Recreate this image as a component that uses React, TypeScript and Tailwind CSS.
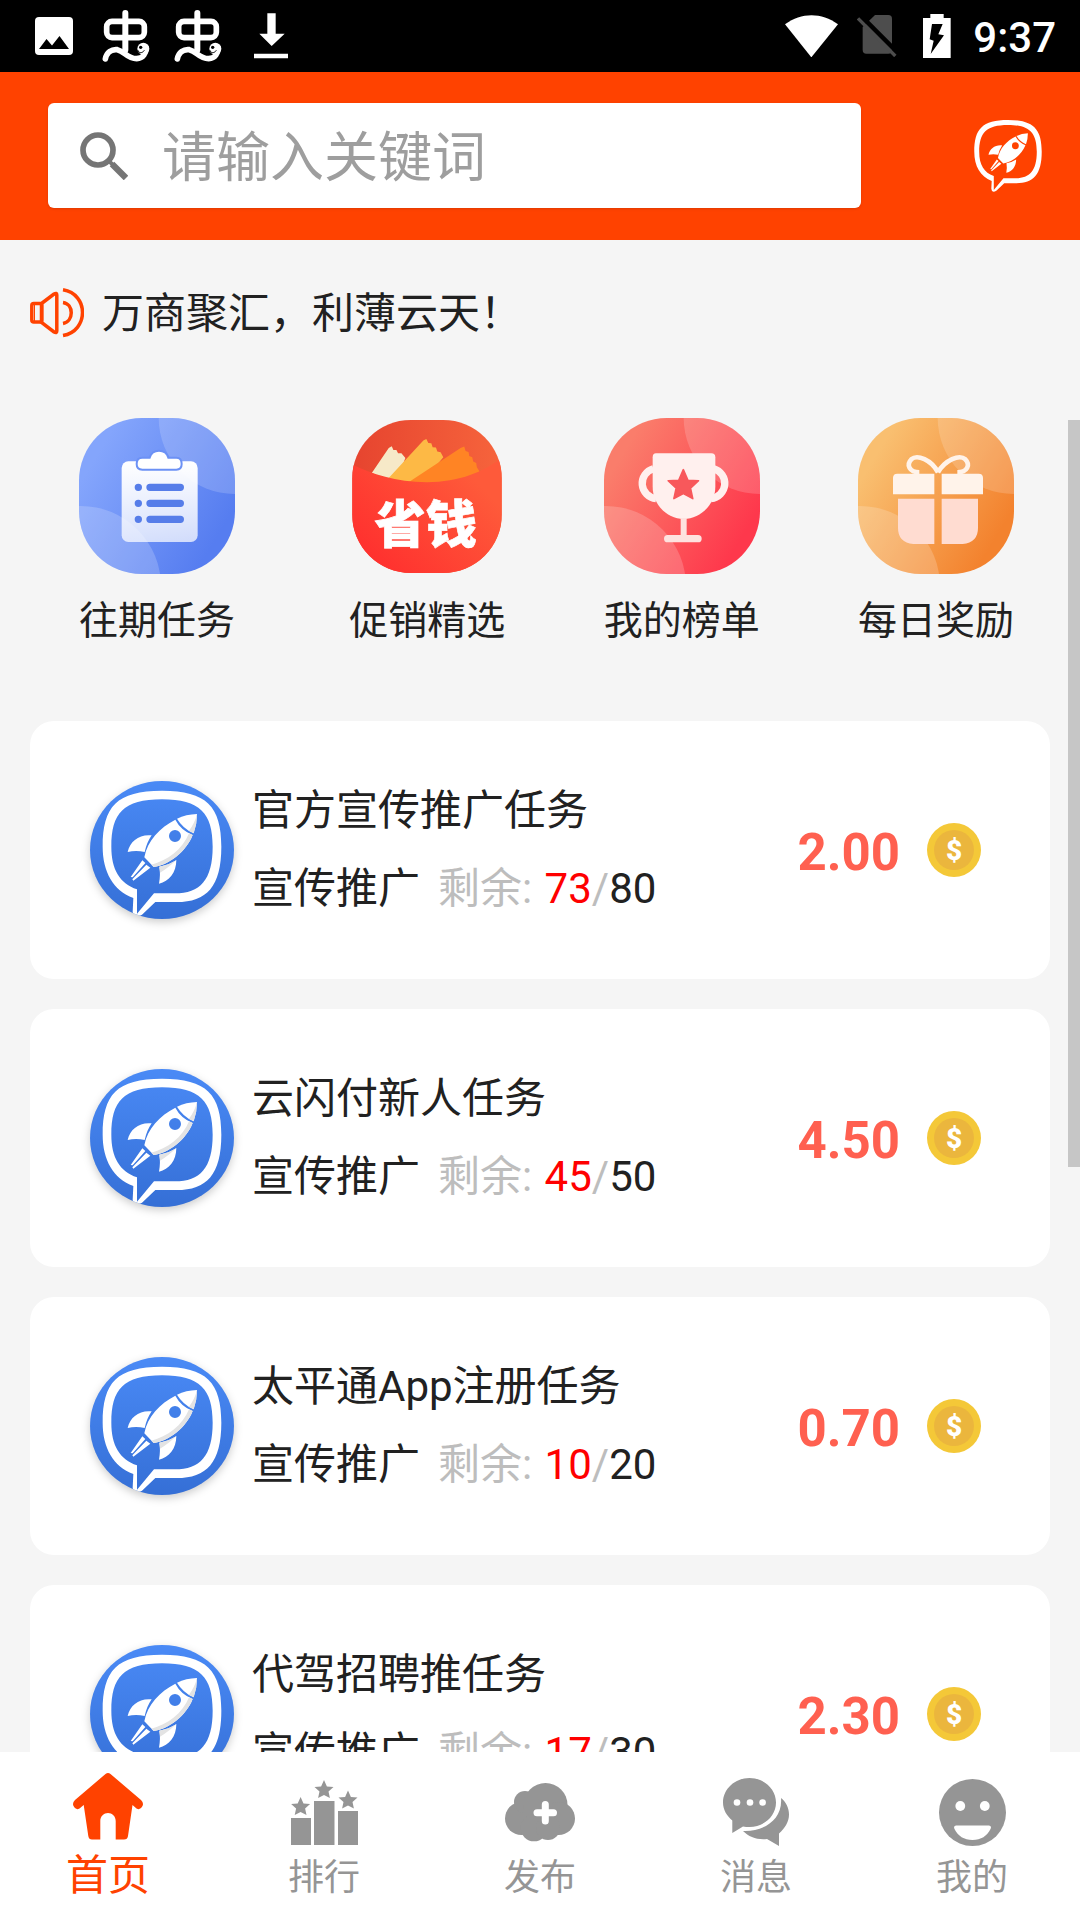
import React from "react";

type Task = {
  title: string;
  category: string;
  left: number;
  total: number;
  price: string;
};

const tasks: Task[] = [
  { title: "官方宣传推广任务", category: "宣传推广", left: 73, total: 80, price: "2.00" },
  { title: "云闪付新人任务", category: "宣传推广", left: 45, total: 50, price: "4.50" },
  { title: "太平通App注册任务", category: "宣传推广", left: 10, total: 20, price: "0.70" },
  { title: "代驾招聘推任务", category: "宣传推广", left: 17, total: 30, price: "2.30" },
];

const STAR = "0,-10 2.9,-3.4 9.5,-3.1 4.5,1.5 5.9,8.1 0,4.9 -5.9,8.1 -4.5,1.5 -9.5,-3.1 -2.9,-3.4";

/* ---------- status bar icons ---------- */

const WormIcon = () => (
  <svg className="h-[52px] w-12" viewBox="306 32 144 156" fill="none" stroke="#fff">
    <rect x="320" y="66" width="113" height="49" rx="16" strokeWidth="17" />
    <path d="M376 41V152" strokeWidth="18" strokeLinecap="round" />
    <path
      d="M316 179C320 159 335 149 352 151C375 156 380 178 410 178C430 177 438 162 438 145"
      strokeWidth="17"
      strokeLinecap="round"
    />
    <circle cx="430" cy="148" r="18" fill="#fff" stroke="none" />
    <path d="M413 152C417 163 427 162 433 153" stroke="#000" strokeWidth="3" />
    <circle cx="422" cy="144" r="5" fill="#000" stroke="none" />
  </svg>
);

const StatusBar = () => (
  <div className="flex h-[72px] shrink-0 items-center justify-between bg-black pl-[35px] pr-6">
    <div className="flex items-center">
      <svg className="size-[38px]" viewBox="0 0 38 38">
        <rect width="38" height="38" rx="4" fill="#fff" />
        <path d="M4 32L11.500 22L17 28.500L24.500 19L34 32Z" fill="#000" />
      </svg>
      <div className="ml-[29px] flex gap-6">
        <WormIcon />
        <WormIcon />
      </div>
      <svg className="ml-8 h-[46px] w-[34px]" viewBox="760 41 102 138" fill="#fff">
        <path d="M800 42H825V103H852L813 140L776 103H800Z" />
        <path d="M760 163H862V177H760Z" />
      </svg>
    </div>
    <div className="flex items-center">
      <svg className="h-[42px] w-[53px]" viewBox="195 42 159 126" fill="#fff">
        <path d="M195 70C245 34 304 34 354 70L274 169Z" />
      </svg>
      <svg className="ml-[19px] h-[42px] w-10" viewBox="409 48 120 126">
        <path d="M463 48H503Q514 48 514 59V153Q514 164 503 164H437Q426 164 426 153V84Z" fill="#4d4d4d" />
        <path d="M420 50L535 165" stroke="#000" strokeWidth="14" />
        <path d="M412 58L524 171" stroke="#4d4d4d" strokeWidth="10" />
      </svg>
      <svg className="ml-[26px] h-[44px] w-7" viewBox="609 42 84 132">
        <path d="M631 42H671V54H692V174H609V54H631Z" fill="#fff" />
        <path d="M636 72H668L655 103L672 106L632 162L641 122L629 118Z" fill="#000" />
      </svg>
      <span className="ml-[22px] pt-[3px] text-[42px] font-medium leading-[50px] text-white">9:37</span>
    </div>
  </div>
);

/* ---------- rocket logo ---------- */

const RocketShapes = ({ shaded = false }: { shaded?: boolean }) => (
  <>
    <path
      fill="#fff"
      fillRule="evenodd"
      d="M160 384C100 362 68 305 68 230C68 110 110 62 246 62C380 62 424 110 424 230C424 350 380 396 290 396H226L186 434Q160 450 158 425ZM171 358C120 340 94 300 94 230C94 130 130 88 246 88C360 88 398 130 398 230C398 330 360 370 285 370H222L171 431Z"
    />
    <path fill="#fff" d="M291 146Q318 133 351 132Q351 162 341 190Q309 176 291 146Z" />
    <path
      fill="#fff"
      fillRule="evenodd"
      d="M286 149C240 172 202 212 193 262L221 291C268 284 318 246 338 195Q302 180 286 149ZM285 180A18 18 0 1 0 285 216A18 18 0 1 0 285 180Z"
    />
    <path fill="#fff" d="M143 246C150 213 178 192 215 196Q200 218 194 246Q168 240 143 246Z" />
    <path fill="#fff" d="M289 270C289 308 267 334 237 341Q242 312 238 290Q267 285 289 270Z" />
    <path fill="#fff" d="M187 271L196 279L158 322L152 321ZM199 284L211 293L160 332L157 328Z" />
    {shaded && (
      <>
        <path fill="#e3e3e3" d="M351 132Q351 162 341 190L327 182Q344 160 351 132Z" />
        <path fill="#e3e3e3" d="M338 195C318 246 268 284 221 291L214 284C262 272 308 238 327 190Z" />
        <path fill="#e3e3e3" d="M289 270Q262 296 240 308L238 290Q267 285 289 270Z" />
      </>
    )}
  </>
);

const TaskLogo = () => (
  <svg
    className="h-[138px] w-36 shrink-0 overflow-visible drop-shadow-[0_3px_4px_rgba(0,0,0,0.2)]"
    viewBox="30 33 432 414"
  >
    <defs>
      <linearGradient id="task-logo-bg" x2="0" y2="1">
        <stop stopColor="#4a8af6" />
        <stop offset="1" stopColor="#356fd6" />
      </linearGradient>
      <clipPath id="task-logo-clip">
        <ellipse cx="246" cy="240" rx="216" ry="207" />
      </clipPath>
    </defs>
    <g clipPath="url(#task-logo-clip)">
      <rect x="30" y="33" width="432" height="414" fill="url(#task-logo-bg)" />
      <RocketShapes shaded />
    </g>
  </svg>
);

const Coin = () => (
  <svg className="size-[54px]" viewBox="0 0 54 54">
    <circle cx="27" cy="27" r="27" fill="#f4c838" />
    <circle cx="27" cy="27" r="20" fill="#ebb63d" />
    <text x="27" y="37" textAnchor="middle" fontSize="28" fontWeight="900" fill="#fff">
      $
    </text>
  </svg>
);

/* ---------- shortcut icons ---------- */

type BadgeProps = { id: string; from: string; to: string; children: React.ReactNode };

const Badge = ({ id, from, to, children }: BadgeProps) => (
  <svg className="size-[156px]" viewBox="0 0 468 468">
    <defs>
      <linearGradient id={id} x1="0" y1="0.2" x2="1" y2="0.8">
        <stop offset="0.1" stopColor={from} />
        <stop offset="0.9" stopColor={to} />
      </linearGradient>
      <linearGradient id={`${id}-paper`} x2="0" y2="1">
        <stop stopColor="#fff" />
        <stop offset="1" stopColor="#fff" stopOpacity="0.72" />
      </linearGradient>
      <clipPath id={`${id}-clip`}>
        <rect width="468" height="468" rx="188" />
      </clipPath>
    </defs>
    <g clipPath={`url(#${id}-clip)`}>
      <rect width="468" height="468" fill={`url(#${id})`} />
      <circle cx="467" cy="0" r="228" fill="#fff" opacity="0.17" />
      <circle cx="5" cy="505" r="241" fill="#fff" opacity="0.19" />
    </g>
    {children}
  </svg>
);

const HistoryIcon = () => (
  <Badge id="history" from="#84a5fc" to="#567df0">
    <rect x="128" y="130" width="228" height="242" rx="20" fill="url(#history-paper)" />
    <path
      d="M190 119H212Q218 98 240 98Q262 98 268 119H292Q308 119 308 138Q308 155 292 155H190Q173 155 173 138Q173 119 190 119Z"
      fill="#fff"
      stroke="#6c91f5"
      strokeWidth="6"
    />
    <g stroke="#567de9" strokeWidth="22" strokeLinecap="round">
      <path d="M178 208V208.100M213 208H304M178 256V256.100M213 256H304M178 304V304.100M213 304H304" />
    </g>
  </Badge>
);

const SavingIcon = () => (
  <svg className="h-[153px] w-[150px]" viewBox="0 0 450 460">
    <defs>
      <linearGradient id="saving-back" x2="1" y2="0">
        <stop stopColor="#e6442f" />
        <stop offset="1" stopColor="#f6643c" />
      </linearGradient>
      <linearGradient id="saving-front" x1="0.1" y1="0.9" x2="0.9" y2="0.3">
        <stop stopColor="#ff2f2e" />
        <stop offset="1" stopColor="#fe5a3a" />
      </linearGradient>
      <clipPath id="saving-clip">
        <rect width="450" height="460" rx="176" />
      </clipPath>
    </defs>
    <g clipPath="url(#saving-clip)">
      <rect width="450" height="460" fill="url(#saving-back)" />
      <path d="M59 159L110 84L119 79L124 90L133 90L138 100L148 100L160 114L130 190Z" fill="#f6e9c8" />
      <path d="M105 180L214 62L223 57L229 69L238 70L242 82L252 83L256 95L266 97L274 112L200 200Z" fill="#fdb945" />
      <path d="M165 190L326 84L337 80L341 93L350 96L352 108L361 112L364 125L373 129L375 142L383 155L340 195Z" fill="#ff8424" />
      <path d="M0 134C60 162 130 187 225 187C320 187 400 155 450 112V460H0Z" fill="url(#saving-front)" />
    </g>
    <text x="221" y="369" textAnchor="middle" fontSize="154" fontWeight="900" fill="#fff" stroke="#fff" strokeWidth="2">
      省钱
    </text>
  </svg>
);

const TrophyIcon = () => (
  <Badge id="trophy" from="#fa7d6b" to="#fe384c">
    <path d="M148 152A46 46 0 0 0 156 242M329 152A46 46 0 0 1 321 242" fill="none" stroke="#fff0ee" strokeWidth="22" />
    <path
      d="M156 106H322Q334 106 334 118V206C334 260 288 303 239 303C190 303 146 260 146 206V118Q146 106 156 106Z"
      fill="#fff0ee"
    />
    <path d="M239 300V360" stroke="#fee2df" strokeWidth="18" />
    <path d="M191 362H282" stroke="#fee2df" strokeWidth="22" strokeLinecap="round" />
    <polygon
      points={STAR}
      transform="translate(238 203) scale(4.8)"
      fill="#f8585b"
      stroke="#f8585b"
      strokeLinejoin="round"
    />
  </Badge>
);

const GiftIcon = () => (
  <Badge id="gift" from="#f9bf70" to="#f3822e">
    <path d="M105 180Q105 167 118 167H229V229H105ZM251 167H362Q375 167 375 180V229H251Z" fill="#fff3ea" />
    <path d="M120 242H229V378H166Q120 374 120 330ZM251 242H360V330Q360 374 314 378H251Z" fill="#ffdcd1" />
    <path
      d="M240 163C220 126 178 108 160 124C144 140 154 163 184 163M240 163C262 126 304 108 322 124C338 140 328 163 298 163"
      fill="none"
      stroke="#fff3ea"
      strokeWidth="14"
    />
  </Badge>
);

const shortcuts = [
  { label: "往期任务", icon: <HistoryIcon />, className: "pr-4" },
  { label: "促销精选", icon: <SavingIcon />, className: "" },
  { label: "我的榜单", icon: <TrophyIcon />, className: "" },
  { label: "每日奖励", icon: <GiftIcon />, className: "" },
];

/* ---------- tab bar icons ---------- */

const HomeIcon = () => (
  <svg className="h-[67px] w-[70px]" viewBox="0 0 70 67" fill="currentColor">
    <path d="M32.500 1Q35 -1 37.500 1L68 27Q71 30 69.500 33Q67 38 63.500 35.500L59.500 32L55 63Q54.500 66.500 51 66.500H42.700V48C42.700 43 39 40 35 40C31 40 27.300 43 27.300 48V66.500H19Q15.800 66.500 15.300 63L10.700 32L6.500 35.500Q3 38 .5 33Q-1 30 2 27Z" />
  </svg>
);

const RankIcon = () => (
  <svg className="h-[65px] w-[67px]" viewBox="0 0 67 65" fill="currentColor">
    <path d="M0 38H20V65H0ZM23 21H43.500V65H23ZM47 31H67V65H47Z" />
    <polygon points={STAR} transform="translate(9.600 27)" />
    <polygon points={STAR} transform="translate(33 10)" />
    <polygon points={STAR} transform="translate(57 20.500)" />
  </svg>
);

const PublishIcon = () => (
  <svg className="h-[59px] w-[70px]" viewBox="0 0 70 59" fill="currentColor">
    <circle cx="16.500" cy="35.500" r="16.500" />
    <circle cx="20" cy="19" r="11" />
    <circle cx="40.500" cy="22" r="22" />
    <circle cx="53.500" cy="35.500" r="16.500" />
    <circle cx="29" cy="45" r="13.300" />
    <circle cx="43" cy="45" r="12" />
    <path d="M40.300 21.500V38M32 29.800H48.500" stroke="#fff" strokeWidth="7" strokeLinecap="round" />
  </svg>
);

const MessageIcon = () => (
  <svg className="h-[68px] w-[66px]" viewBox="0 0 66 68" fill="currentColor">
    <path d="M26.500 0C41 0 53 11 53 24.500C53 38 41 49 26.500 49Q23 49 20 48.500L9.300 55V42.500C4 38 0 32 0 24.500C0 11 12 0 26.500 0Z" />
    <path d="M58 20C63 24 66 30 66 36.500C66 44 62 50 56 55.500V68L44 61C34 62 26 59 20 53C40 54 60 42 58 20Z" />
    <g fill="#fff">
      <circle cx="14" cy="24.500" r="3.300" />
      <circle cx="27" cy="24.500" r="3.300" />
      <circle cx="39.600" cy="24.500" r="3.300" />
    </g>
  </svg>
);

const MineIcon = () => (
  <svg className="size-[67px]" viewBox="0 0 67 67" fill="currentColor">
    <circle cx="33.500" cy="33.500" r="33.500" />
    <g fill="#fff">
      <circle cx="21.300" cy="27" r="4.900" />
      <circle cx="45.800" cy="27" r="4.900" />
      <path d="M17 46.500H50Q53 47 51.500 50C48 57 42 61 33.500 61C25 61 19 57 15.500 50Q14 47 17 46.500Z" />
    </g>
  </svg>
);

const tabs = [
  { label: "首页", icon: <HomeIcon />, active: true },
  { label: "排行", icon: <RankIcon />, active: false },
  { label: "发布", icon: <PublishIcon />, active: false },
  { label: "消息", icon: <MessageIcon />, active: false },
  { label: "我的", icon: <MineIcon />, active: false },
];

/* ---------- page sections ---------- */

const Header = () => (
  <header className="flex shrink-0 items-center justify-between bg-[#ff4200] pb-8 pl-12 pr-[38px] pt-[31px]">
    <label className="mr-[113px] flex h-[105px] flex-1 items-center rounded-md bg-white pl-8 shadow">
      <svg className="size-12 shrink-0" viewBox="240 391 144 144" fill="none" stroke="#757575">
        <circle cx="294" cy="445" r="45" strokeWidth="17" />
        <path d="M328 479L338 489" strokeWidth="12" />
        <path d="M336 487L378 529" strokeWidth="19" />
      </svg>
      <input
        type="search"
        aria-label="搜索"
        placeholder="请输入关键词"
        className="ml-[34px] min-w-0 flex-1 bg-transparent pt-1.5 text-[54px] leading-[80px] text-[#212121] outline-none placeholder:text-[#9e9e9e]"
      />
    </label>
    <button type="button" aria-label="推广">
      <svg className="h-[72px] w-[68px]" viewBox="68 62 356 380">
        <RocketShapes />
      </svg>
    </button>
  </header>
);

const Notice = () => (
  <div className="flex items-center gap-[18px] px-[30px] pt-[43px]">
    <svg className="h-[50px] w-[54px] shrink-0" viewBox="0 0 54 50" fill="none" stroke="#ff4200" strokeWidth="3.500">
      <rect x="1.800" y="15.500" width="10" height="18.500" rx="2" />
      <path d="M4.500 16V34" strokeWidth="1" />
      <path d="M11.500 15.500L24 6Q26.800 4.500 26.800 7V43Q26.800 45.500 24 44L11.500 34.500Z" />
      <path d="M33 14.500C44 16 44 33.500 33 35.500M33 1.800C59 6 59 43 33 47.500" />
    </svg>
    <p className="pt-0.5 text-[42px] leading-[58px]">万商聚汇，利薄云天！</p>
  </div>
);

const Shortcuts = () => (
  <nav className="flex justify-between pl-[79px] pr-[66px] pt-[75px]">
    {shortcuts.map((item) => (
      <div key={item.label} className={item.className}>
        <button type="button" className="flex w-[156px] flex-col items-center gap-[18px]">
          <span className="flex h-[156px] items-center">{item.icon}</span>
          <span className="whitespace-nowrap text-[39px] leading-[58px]">{item.label}</span>
        </button>
      </div>
    ))}
  </nav>
);

const TaskCard = ({ task }: { task: Task }) => (
  <li className="flex items-center rounded-3xl bg-white py-[60px] pl-[60px] pr-[69px]">
    <TaskLogo />
    <div className="ml-[18px] flex flex-1 flex-col gap-[18px] text-[42px] leading-[60px]">
      <h2>{task.title}</h2>
      <p>
        {task.category}
        <span className="ml-[18px] mr-0.5 text-[#bdbdbd]">剩余: </span>
        <span className="text-[#ff0000]">{task.left}</span>
        <span className="text-[#bdbdbd]">/</span>
        {task.total}
      </p>
    </div>
    <span className="mr-[27px] pt-[5px] text-[51px] font-bold leading-[60px] text-[#ff6050]">{task.price}</span>
    <Coin />
  </li>
);

const TabBar = () => (
  <nav className="grid h-[168px] shrink-0 grid-cols-5 bg-white">
    {tabs.map((tab) => (
      <button
        key={tab.label}
        type="button"
        className={
          tab.active
            ? "flex flex-col items-center justify-end pb-[14px] text-[42px] leading-[60px] text-[#ff4200]"
            : "flex flex-col items-center justify-end pb-[14px] text-[36px] leading-[56px] text-[#959595]"
        }
      >
        <span className={tab.active ? "flex h-[73px] items-start" : "flex h-[76px] items-center"}>{tab.icon}</span>
        {tab.label}
      </button>
    ))}
  </nav>
);

export default function App() {
  return (
    <div className="flex h-screen flex-col bg-[#f5f5f5] font-[Roboto,'Noto_Sans_CJK_SC',sans-serif] text-[#212121]">
      <StatusBar />
      <Header />
      <div className="relative min-h-0 flex-1">
        <main className="h-full overflow-y-auto [scrollbar-width:none]">
          <Notice />
          <Shortcuts />
          <ul className="flex flex-col gap-[30px] px-[30px] pb-[30px] pt-[71px]">
            {tasks.map((task) => (
              <TaskCard key={task.title} task={task} />
            ))}
          </ul>
        </main>
        <div className="absolute right-0 top-[180px] h-[747px] w-3 bg-[#c6c6c6]" />
      </div>
      <TabBar />
    </div>
  );
}
